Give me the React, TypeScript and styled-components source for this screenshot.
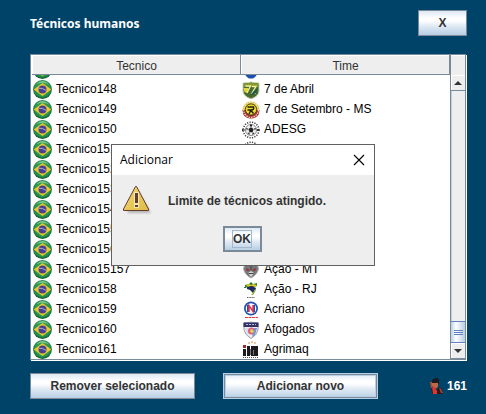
import React from "react";
import styled, { createGlobalStyle, css } from "styled-components";

const GlobalStyle = createGlobalStyle`
  * { box-sizing: border-box; }
  body {
    margin: 0;
    background: #004368;
    font-family: "Liberation Sans", Arial, sans-serif;
    font-size: 12px;
    line-height: 16px;
    color: #000;
  }
`;

const Page = styled.main`
  display: flex;
  flex-direction: column;
  height: 100vh;
  padding: 10px 19px 15px 30px;
`;

const TopBar = styled.header`
  display: flex;
  justify-content: space-between;
  align-items: center;
  margin-bottom: 18px;
`;

const Title = styled.h1`
  margin: 0;
  padding-top: 2px;
  font-family: "Noto Sans", sans-serif;
  font-size: 12px;
  font-weight: 700;
  color: #fff;
`;

const MetalButton = styled.button<{ $width: number; $look?: "default" | "focused" }>`
  display: flex;
  align-items: center;
  justify-content: center;
  width: ${(p) => p.$width}px;
  height: 26px;
  padding: 0;
  border: 1px solid #7a8a99;
  border-radius: 0;
  background: linear-gradient(#dde8f3, #fff 30%, #fff 40%, #dde8f3 65%, #b8cfe5);
  font: bold 12px/16px "Liberation Sans", Arial, sans-serif;
  color: #333;
  ${(p) => p.$look === "default" && css`border: 2px solid #7a8a99;`}
  ${(p) =>
    p.$look === "focused" &&
    css`
      box-shadow: inset 0 0 0 1px #7a8a99, inset 0 0 0 2px #b8cfe5;
      border-color: #b8cfe5;
    `}
`;

const FocusRing = styled.span`
  display: flex;
  align-items: center;
  height: 18px;
  border: 1px solid #a3b8cc;
`;

const Frame = styled.section`
  display: flex;
  flex: 1;
  min-height: 0;
  margin: 0 1px 13px 0;
  border: 1px solid #7a8a99;
  box-shadow: 1px 1px #fff;
  background: #fff;
`;

const Table = styled.table`
  display: flex;
  flex-direction: column;
  flex: 1;
  min-width: 0;
  padding-left: 1px;
`;

const Head = styled.thead`
  display: block;
`;

const Body = styled.tbody`
  display: flex;
  flex: 1;
  flex-direction: column;
  justify-content: flex-end;
  min-height: 0;
  overflow: hidden;
`;

const Row = styled.tr`
  display: grid;
  grid-template-columns: 1fr 1fr;
  flex: none;
`;

const HeadCell = styled.th`
  height: 20px;
  padding: 1px 0 0 1px;
  border: solid #7a8a99;
  border-width: 0 1px 1px 0;
  background: #eee;
  box-shadow: inset 1px 1px #fff;
  font-weight: 400;
  line-height: 20px;
  text-align: center;
  color: #333;
`;

const Cell = styled.td`
  display: flex;
  align-items: center;
  gap: 4px;
  height: 20px;
  padding: 1px 0 0 1px;
  line-height: 19px;
  white-space: nowrap;
  svg { flex: none; }
`;

const ScrollBar = styled.div`
  display: flex;
  flex-direction: column;
  width: 15px;
  border-left: 1px solid #7a8a99;
  background: #eee;
`;

const Corner = styled.div`
  height: 20px;
  border-top: 1px solid #fff;
`;

const ArrowButton = styled.button`
  display: flex;
  align-items: center;
  justify-content: center;
  height: 16px;
  padding: 0;
  border: 0;
  border-top: 1px solid #fff;
  border-bottom: 1px solid #7a8a99;
  background: #eee;
  box-shadow: inset 1px 0 #fff;
`;

const Track = styled.div`
  display: flex;
  flex: 1;
  flex-direction: column;
  justify-content: flex-end;
  box-shadow: inset 1px 0 #b8cfe5;
`;

const Thumb = styled.div`
  display: flex;
  flex-direction: column;
  align-items: center;
  justify-content: center;
  gap: 1px;
  height: 22px;
  border: 1px solid #6382bf;
  border-width: 1px 0;
  background: linear-gradient(90deg, #b8cfe5, #fff 35%, #dde8f3 65%, #b8cfe5);
`;

const Grip = styled.span`
  width: 9px;
  height: 1px;
  background: #6382bf;
`;

const Footer = styled.footer`
  display: flex;
  align-items: center;
  gap: 28px;
`;

const Counter = styled.div`
  display: flex;
  align-items: center;
  gap: 4px;
  margin-left: auto;
  font-weight: 700;
  color: #fff;
`;

const Overlay = styled.div`
  position: fixed;
  inset: 0;
  display: flex;
  align-items: center;
  justify-content: center;
  padding-bottom: 4px;
`;

const Dialog = styled.section`
  width: 264px;
  border: 1px solid #606060;
  background: #eee;
`;

const DialogBar = styled.header`
  display: flex;
  align-items: center;
  justify-content: space-between;
  height: 30px;
  padding: 0 9px 0 8px;
  background: #fff;
`;

const DialogTitle = styled.h2`
  margin: 0;
  font: 400 12px/16px "Open Sans", sans-serif;
`;

const CloseButton = styled.button`
  display: flex;
  padding: 0;
  border: 0;
  background: none;
`;

const DialogBody = styled.div`
  display: flex;
  flex-direction: column;
  align-items: center;
  gap: 9px;
  padding: 10px 12px 13px 10px;
`;

const Message = styled.p`
  display: flex;
  align-items: center;
  align-self: stretch;
  gap: 14px;
  margin: 0;
  font-weight: 700;
  color: #333;
`;

const Flag = () => (
  <svg width="19" height="19" viewBox="0 0 19 19" aria-hidden="true">
    <defs>
      <radialGradient id="ball" cx=".5" cy=".45" r=".55">
        <stop offset="0" stopColor="#3fae62" />
        <stop offset=".75" stopColor="#27944f" />
        <stop offset="1" stopColor="#0c5a2c" />
      </radialGradient>
    </defs>
    <circle cx="9.5" cy="9.5" r="9.4" fill="url(#ball)" />
    <path d="M3 4.400Q9.500-2.400 16 4.400Q9.500 1.200 3 4.400" fill="#b9e3bd" opacity=".6" />
    <path d="M.8 9.500 9.500 3l8.700 6.500-8.700 6.500z" fill="#eec92a" />
    <circle cx="9.500" cy="9.500" r="4" fill="#4a4192" />
    <path d="M6 8.200q3.800-.3 7 2.200" stroke="#a5a9d2" strokeWidth="1" fill="none" />
  </svg>
);

type CrestKind = "blue" | "abril" | "setembro" | "adesg" | "mt" | "rj" | "acriano" | "afogados" | "agrimaq";

const crestArt: Record<CrestKind, React.ReactNode> = {
  blue: (
    <path d="M2 2h14v9q-1 4-5 6.500H7Q3 15 2 11z" fill="#1c4fae" />
  ),
  abril: (
    <>
      <path d="M1 2q5 0 8-1 3 1 8 1v8q0 5-8 8-8-3-8-8z" fill="#4a6b2f" stroke="#c9cfb4" />
      <path d="M2 2.500q4 0 7-1 3 1 7 1V6H2z" fill="#87992d" />
      <path d="M1.500 7h5l-1 5-3-1z" fill="#d9d73c" />
      <path d="M3.500 5h5L5 12M10 5.500h4L10 12h4" fill="none" stroke="#eff0a4" strokeWidth="1.300" />
      <path d="m8 15 6-3 2-5-5 4z" fill="#1d5a4a" />
    </>
  ),
  setembro: (
    <>
      <circle cx="9" cy="9" r="8.500" fill="#d8c23c" />
      <path d="M.5 9q0 8.500 8.500 8.500T17.500 9z" fill="#ac3038" />
      <circle cx="9" cy="9" r="7.400" fill="none" stroke="#f2e9c8" strokeWidth="1.200" strokeDasharray="1.500 1" />
      <circle cx="9" cy="8.500" r="5.600" fill="#ecdd32" stroke="#2c240a" strokeWidth=".8" />
      <path d="M5.500 6h6q1 3-2.500 3l-2 4M5.500 9h3l3 3.500" fill="none" stroke="#251e09" strokeWidth="1.400" />
    </>
  ),
  adesg: (
    <>
      <circle cx="9" cy="9" r="7.800" fill="#fff" stroke="#444" strokeWidth="1.600" strokeDasharray="1.200 1.300" />
      <circle cx="9" cy="9" r="5.600" fill="#eee" stroke="#777" strokeWidth=".8" />
      <path d="m9 6.200 2.600 1.900-1 3.100H7.400l-1-3.100zM8 3.500h2v2H8zM4 7l2 .5-1 2zM14 7l-2 .5 1 2zM5.500 12l2-.5v2.500zM12.500 12l-2-.5v2.500z" fill="#222" />
      <path d="M0 9h3m12 0h3" stroke="#333" strokeWidth="2" strokeDasharray="1 .5" />
    </>
  ),
  mt: (
    <>
      <path d="m3 2 3 2h6l3-2 1.500 6Q15 14 9 17 3 14 1.500 8z" fill="#77747a" stroke="#aaa" />
      <path d="m4 7 4 2-3 1zm10 0-4 2 3 1z" fill="#9d2929" />
      <path d="m6 12 3-2 3 2-3 4z" fill="#d9d6d6" />
      <path d="M6.500 12.500h5M9 3v6" stroke="#424047" />
    </>
  ),
  rj: (
    <>
      <path d="m3 4 4-1 2-2 2 2 4-1 0 3-3 1-5 1-4-1z" fill="#2c7a2a" />
      <path d="m4 4 3-1 2 1 2-1 4 1-2 2-3-1-4 1z" fill="#d8cb2c" />
      <path d="m5 6 5-1 4 2-1 3-2 2-3-3-3-1z" fill="#20295f" />
      <path d="m12 9 2-1-1 3-2 3-2 0 2-2z" fill="#86a82c" />
      <path d="M2 6.500h2" stroke="#2c7a2a" />
      <path d="M5 16.500h8" stroke="#555" strokeDasharray="1 .6" />
    </>
  ),
  acriano: (
    <>
      <circle cx="9" cy="7.500" r="7" fill="#2452b0" />
      <circle cx="9" cy="7.500" r="5.300" fill="#fff" />
      <path d="M6 4v7M12 4v7" stroke="#2452b0" strokeWidth="2" />
      <path d="M7 11V4.500l4 6V4" fill="none" stroke="#e03550" strokeWidth="1.500" />
      <path d="M3 16.500h13" stroke="#e43848" strokeDasharray="3 .5" />
    </>
  ),
  afogados: (
    <>
      <path d="M2 2q3 0 7-1 4 1 7 1v7q-1 5-7 8.500Q3 14 2 9z" fill="#ededf3" stroke="#9a9cb2" />
      <path d="M1.500 1.500h15V6h-15z" fill="#303266" />
      <path d="M4 3.500h10" stroke="#b9bbd2" strokeDasharray="2 1" />
      <path d="m3 7 3 8 2-8z" fill="#d9dbe8" />
      <circle cx="9.500" cy="10" r="3.500" fill="#e0607a" />
      <path d="m15 7-2 7-3 2 2-9z" fill="#7a93c8" />
      <path d="m9 8 2 1 1 2-3 1-1-2z" fill="#e6d553" />
    </>
  ),
  agrimaq: (
    <>
      <path d="M1 4h3v3H1zM1 8h3v7H1zM5 5h3v10H5zM9 5h7v10H9z" fill="#1c1a1d" />
      <path d="M1 4h3v3H1z" fill="#a22b2b" />
      <path d="M8.500 8v6M11.500 9v5" stroke="#777" />
      <path d="M1 16.500h15" stroke="#555" strokeDasharray="1 1" />
      <path d="M6 2h2m1-1h2m1 1h2" stroke="#dc8f40" />
    </>
  ),
};

const Crest = ({ kind }: { kind: CrestKind }) => (
  <svg width="18" height="18" viewBox="0 0 18 18" aria-hidden="true">
    {crestArt[kind]}
  </svg>
);

const Arrow = ({ down }: { down?: boolean }) => (
  <svg width="8" height="4" viewBox="0 0 8 4" aria-hidden="true">
    <path d={down ? "M0 0h8L4 4z" : "M0 4h8L4 0z"} fill="#333" />
  </svg>
);

const Warning = () => (
  <svg width="32" height="32" viewBox="0 0 32 32" aria-hidden="true">
    <defs>
      <linearGradient id="amber" x1="0" y1="0" x2="1" y2="1">
        <stop offset="0" stopColor="#f0da72" />
        <stop offset="1" stopColor="#dfbb45" />
      </linearGradient>
      <filter id="soft"><feGaussianBlur stdDeviation="1" /></filter>
    </defs>
    <path d="M15 4 29 28H5z" fill="#888" opacity=".55" filter="url(#soft)" />
    <path d="M13.500 1.500h1L26.500 24v1.500h-25V24z" fill="url(#amber)" stroke="#663b30" strokeLinejoin="round" />
    <path d="M12 7h5v11h-5zM12 18h5v5h-5z" fill="#f6e9b0" />
    <path d="M13 8h3v10h-3zM13 20h3v2h-3z" fill="#693b36" />
  </svg>
);

const Coach = () => (
  <svg width="13" height="16" viewBox="0 0 13 16" aria-hidden="true">
    <path d="M2 3q1-3 4-3 4 0 3 4v2H2z" fill="#171c22" />
    <path d="M2 4h6v4L7 10H4L2 8z" fill="#c26645" />
    <path d="M2 4h6v1H2z" fill="#241c20" />
    <path d="M1 9h3l3 3 2-3 3 2 1 5H2z" fill="#2a1a20" />
    <path d="M2 9h3l2 4v3H3z" fill="#d8382d" />
    <path d="m9 10 2 1 2 4h-2z" fill="#b0433a" />
    <path d="M0 4h2v6H1z" fill="#a3533a" />
  </svg>
);

const rows: { coach: string; team: string; crest: CrestKind }[] = [
  { coach: "", team: "", crest: "blue" },
  { coach: "Tecnico148", team: "7 de Abril", crest: "abril" },
  { coach: "Tecnico149", team: "7 de Setembro - MS", crest: "setembro" },
  { coach: "Tecnico150", team: "ADESG", crest: "adesg" },
  { coach: "Tecnico151", team: "", crest: "adesg" },
  { coach: "Tecnico152", team: "", crest: "adesg" },
  { coach: "Tecnico153", team: "", crest: "adesg" },
  { coach: "Tecnico154", team: "", crest: "adesg" },
  { coach: "Tecnico155", team: "", crest: "adesg" },
  { coach: "Tecnico156", team: "", crest: "adesg" },
  { coach: "Tecnico15157", team: "Ação - MT", crest: "mt" },
  { coach: "Tecnico158", team: "Ação - RJ", crest: "rj" },
  { coach: "Tecnico159", team: "Acriano", crest: "acriano" },
  { coach: "Tecnico160", team: "Afogados", crest: "afogados" },
  { coach: "Tecnico161", team: "Agrimaq", crest: "agrimaq" },
];

export default function App() {
  return (
    <>
      <GlobalStyle />
      <Page>
        <TopBar>
          <Title>Técnicos humanos</Title>
          <MetalButton $width={49}>X</MetalButton>
        </TopBar>
        <Frame>
          <Table cellSpacing={0}>
            <Head>
              <Row>
                <HeadCell scope="col">Tecnico</HeadCell>
                <HeadCell scope="col">Time</HeadCell>
              </Row>
            </Head>
            <Body>
              {rows.map((row, index) => (
                <Row key={index}>
                  <Cell><Flag />{row.coach}</Cell>
                  <Cell><Crest kind={row.crest} />{row.team}</Cell>
                </Row>
              ))}
            </Body>
          </Table>
          <ScrollBar>
            <Corner />
            <ArrowButton aria-label="Subir"><Arrow /></ArrowButton>
            <Track>
              <Thumb><Grip /><Grip /><Grip /></Thumb>
            </Track>
            <ArrowButton aria-label="Descer"><Arrow down /></ArrowButton>
          </ScrollBar>
        </Frame>
        <Footer>
          <MetalButton $width={165}>Remover selecionado</MetalButton>
          <MetalButton $width={155} $look="focused">Adicionar novo</MetalButton>
          <Counter><Coach />161</Counter>
        </Footer>
      </Page>
      <Overlay>
        <Dialog role="dialog" aria-labelledby="dialog-title">
          <DialogBar>
            <DialogTitle id="dialog-title">Adicionar</DialogTitle>
            <CloseButton aria-label="Fechar">
              <svg width="12" height="12" viewBox="0 0 12 12" aria-hidden="true">
                <path d="m1 1 10 10M11 1 1 11" stroke="#000" strokeWidth="1.1" />
              </svg>
            </CloseButton>
          </DialogBar>
          <DialogBody>
            <Message><Warning />Limite de técnicos atingido.</Message>
            <MetalButton $width={39} $look="default"><FocusRing>OK</FocusRing></MetalButton>
          </DialogBody>
        </Dialog>
      </Overlay>
    </>
  );
}
